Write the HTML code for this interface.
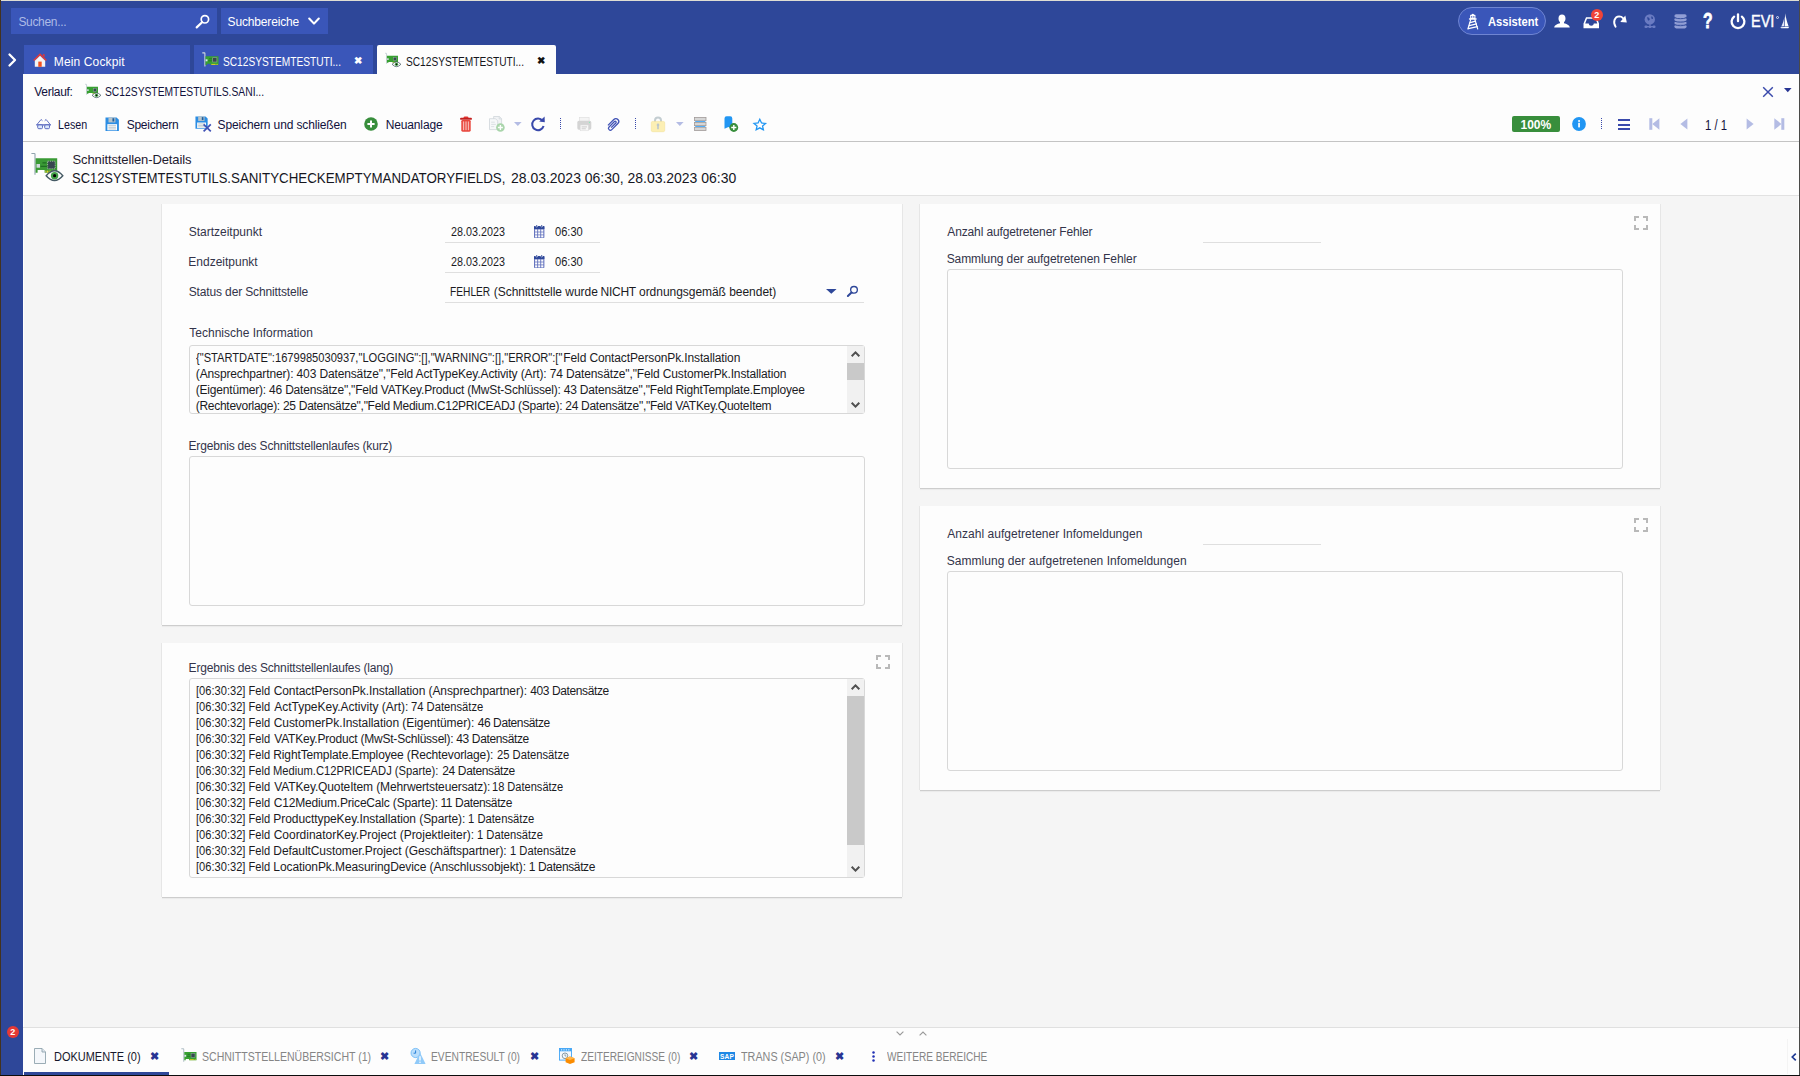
<!DOCTYPE html>
<html lang="de"><head><meta charset="utf-8"><title>Schnittstellen-Details</title>
<style>
*{box-sizing:border-box;margin:0;padding:0}
html,body{width:1800px;height:1076px;overflow:hidden;background:#f5f5f5}
body{font-family:"Liberation Sans",sans-serif;position:relative}
.t{position:absolute;white-space:pre;}
.a{position:absolute}
.panel{position:absolute;background:#fdfdfd;box-shadow:0 1px 0 #cdcdcd,0 2px 1px rgba(0,0,0,.04),1px 0 0 #e7e7e7,-1px 0 0 #e7e7e7}
.box{position:absolute;background:#fdfdfd;border:1px solid #d8d8d8;border-radius:3px}
.ul{position:absolute;height:1px;background:#dfdfdf}
svg{position:absolute;overflow:visible}
</style></head><body>
<div class="a" style="left:0px;top:0px;width:1800px;height:74px;background:#2e4799;"></div>
<div class="a" style="left:0px;top:74px;width:23px;height:1002px;background:#2e4799;"></div>
<div class="a" style="left:23px;top:74px;width:1777px;height:122px;background:#fdfdfd;"></div>
<div class="a" style="left:23px;top:141px;width:1777px;height:1px;background:#c4c4c4;"></div>
<div class="a" style="left:23px;top:195px;width:1777px;height:1px;background:#e2e2e2;"></div>
<div class="a" style="left:23px;top:1027px;width:1777px;height:49px;background:#fdfdfd;"></div>
<div class="a" style="left:23px;top:1027px;width:1777px;height:1px;background:#e0e0e0;"></div>
<div class="a" style="left:11px;top:8px;width:206px;height:26px;background:#3a56b9;"></div>
<span class="t" style="left:18.4px;top:13.84px;font-size:12px;line-height:16px;color:#aebbe6;letter-spacing:-0.325px;">Suchen...</span>
<svg style="left:195px;top:14px" width="16" height="15" viewBox="0 0 16 15"><circle cx="9.900" cy="5.300" r="3.700" fill="none" stroke="#fff" stroke-width="1.700"/><path d="M7.100 8.200 L1.700 13.400" stroke="#fff" stroke-width="2.200" stroke-linecap="round"/></svg>
<div class="a" style="left:221px;top:8px;width:107px;height:26px;background:#3a56b9;"></div>
<span class="t" style="left:227.6px;top:13.84px;font-size:12px;line-height:16px;color:#fff;letter-spacing:-0.163px;">Suchbereiche</span>
<svg style="left:308px;top:17px" width="12" height="9" viewBox="0 0 12 9"><path d="M1.2 1.5 L6 6.6 L10.8 1.5" fill="none" stroke="#fff" stroke-width="2.1" stroke-linecap="round" stroke-linejoin="round"/></svg>
<div class="a" style="left:1458px;top:7px;width:88px;height:28px;border-radius:14px;background:#3a56b9;border:1px solid #6f85d2"></div>
<svg style="left:1467px;top:12.600px" width="12" height="16.500" viewBox="0 0 12 16" preserveAspectRatio="none"><path d="M4.300 2.100 Q5.800 -0.600 7.300 2.100 Z" fill="#fff"/><g fill="none" stroke="#fff" stroke-width="1.150" stroke-linecap="round" stroke-linejoin="round"><path d="M3.700 2.300 H7.900 V5.200 H3.700 Z M5.800 2.300 V5.200"/><path d="M2.500 5.800 H9.100" stroke-width="1.300"/><path d="M3.700 6.400 L0.900 15.500"/><path d="M7.900 6.400 L10.700 15.500"/><path d="M3.100 9.300 L8.600 7.900"/><path d="M2.300 12.300 L9.500 10.500"/><path d="M1.400 15.200 L10.300 13.200"/></g></svg>
<span class="t" style="left:1488.3px;top:13.84px;font-size:12px;line-height:16px;color:#fff;font-weight:700;transform:scaleX(0.9291);transform-origin:0 0;">Assistent</span>
<svg style="left:1553px;top:14px" width="18" height="14" viewBox="0 0 18 14"><path d="M9 0.6c2.2 0 3.5 1.6 3.5 3.8 0 1.6-.7 3-1.5 3.8v1c2.6.7 5.4 1.6 5.8 4.2H1.200c.4-2.600 3.200-3.500 5.800-4.200v-1c-.8-.8-1.500-2.200-1.500-3.800C5.500 2.200 6.800.6 9 .6z" fill="#fff"/></svg>
<svg style="left:1583px;top:16px" width="17" height="13" viewBox="0 0 17 13"><path d="M3 1.200H13.600L16 7.600V12.300H0.500V7.600Z M4 2.700L2.200 7.600H5.700C5.900 9.100 6.900 9.800 8.250 9.800C9.600 9.800 10.600 9.100 10.800 7.600H14.300L12.600 2.700Z" fill="#fff" fill-rule="evenodd"/></svg>
<div class="a" style="left:1591.300px;top:9.300px;width:11.600px;height:11.600px;border-radius:6px;background:#f04438"></div>
<span class="t" style="left:1594.33px;top:7.18px;font-size:9px;line-height:16px;color:#fff;font-weight:700;">2</span>
<svg style="left:1612px;top:14px" width="16" height="14" viewBox="0 0 16 14"><path d="M3.600 12.800 C0.600 8 2.600 2.600 7.200 2.400 C8.800 2.400 10 3 11 4.200" fill="none" stroke="#fff" stroke-width="1.900" stroke-linecap="round"/><path d="M8.300 8 L13.300 1.500 L14.800 8.600 Z" fill="#fff"/></svg>
<svg style="left:1644px;top:14px" width="12" height="15" viewBox="0 0 12 15"><circle cx="5.800" cy="5.400" r="5.200" fill="#6a7bc2"/><path d="M3 3.500c1-.5 2 .3 2.600 1.200s-.6 2-1.600 1.800zM7.500 2.200c1 .3 1.800 1.300 1.500 2.300s-1.600.6-1.800-.4z" fill="#2e4799"/><path d="M6 10v2.500M2 12.700h8" stroke="#6a7bc2" stroke-width="1.200" fill="none"/><rect x="0.500" y="11.500" width="3" height="2.600" rx="1" fill="#6a7bc2"/><rect x="8.500" y="11.500" width="3" height="2.600" rx="1" fill="#6a7bc2"/><rect x="4.600" y="11.700" width="2.800" height="2.300" rx=".8" fill="#6a7bc2"/></svg>
<svg style="left:1674px;top:14px" width="13" height="15" viewBox="0 0 13 15"><g fill="#919ed5"><rect x="0.400" y="0.300" width="12.200" height="3.600" rx="1.800"/><rect x="0.400" y="3.800" width="12.200" height="3.500" rx="1.700"/><rect x="0.400" y="7.300" width="12.200" height="3.500" rx="1.700"/><rect x="0.400" y="10.800" width="12.200" height="3.600" rx="1.800"/></g><g stroke="#2e4799" stroke-width="0.900" fill="none"><path d="M1 3.800c2 1.200 9 1.200 11 0M1 7.300c2 1.200 9 1.200 11 0M1 10.800c2 1.200 9 1.200 11 0"/></g></svg>
<span class="t" style="left:1703.24px;top:6.45px;font-size:21.5px;line-height:30px;color:#fff;font-weight:700;transform:scaleX(0.7306);transform-origin:0 0;-webkit-text-stroke:0.8px #fff;">?</span>
<svg style="left:1730px;top:13px" width="16" height="16" viewBox="0 0 16 16"><path d="M4.100 3.600A6.400 6.400 0 1 0 11.900 3.600" fill="none" stroke="#fff" stroke-width="2.300" stroke-linecap="round"/><path d="M8 1.400V8.200" stroke="#fff" stroke-width="2.300" stroke-linecap="round"/></svg>
<span class="t" style="left:1751.14px;top:10.66px;font-size:16px;line-height:22px;color:#fff;transform:scaleX(0.9071);transform-origin:0 0;-webkit-text-stroke:0.4px #fff;">EVI</span>
<div class="a" style="left:1776px;top:16px;width:3px;height:3px;border-radius:2px;border:0.8px solid #dfe4f6"></div>
<svg style="left:1779.500px;top:13px" width="10" height="16" viewBox="0 0 10 16"><path d="M5.300 0.300 C5.900 4.500 6.900 9 8.600 13.200 L4.600 13.400 Z" fill="#fff"/><path d="M4.500 3.500 C3.900 7 2.900 10.400 1.300 13.500 L4 13.300 Z" fill="#e4e8f7"/><path d="M0.200 14.300 L9.300 13.700 L8.300 15.200 H1.400 Z" fill="#fff"/></svg>
<svg style="left:8px;top:53px" width="9" height="14" viewBox="0 0 9 14"><path d="M1.500 1.500 L7 7 L1.500 12.500" fill="none" stroke="#fff" stroke-width="2.300" stroke-linecap="round" stroke-linejoin="round"/></svg>
<div class="a" style="left:24px;top:45px;width:166px;height:29px;background:#3a56b9;"></div>
<div class="a" style="left:194px;top:45px;width:179px;height:29px;background:#3a56b9;"></div>
<div class="a" style="left:377px;top:45px;width:179px;height:29px;background:#fdfdfd;border-radius:2px 2px 0 0"></div>
<svg style="left:33px;top:53px" width="14" height="14" viewBox="0 0 14 14"><path d="M7 0.300 L0.200 7 L1.200 8 L7 2.400 L12.800 8 L13.800 7 Z" fill="#e53935"/><path d="M9.800 1.200h1.800v3l-1.800-1.700z" fill="#e53935"/><path d="M7 2.800 L1.800 7.800 V13.800 H12.200 V7.800 Z" fill="#f4f4f4"/><rect x="5.300" y="8.600" width="3.400" height="5.200" fill="#f4511e"/></svg>
<span class="t" style="left:53.84px;top:53.84px;font-size:12px;line-height:16px;color:#fff;letter-spacing:0.131px;">Mein Cockpit</span>
<svg style="left:201.6px;top:52.3px" width="17" height="15" viewBox="0 0 17 15"><path d="M0.300 0.900 H2.400 Q2.900 0.900 2.900 1.500 V14.600" fill="none" stroke="#cfd8dc" stroke-width="1.100"/><path d="M3.500 4.200 H16.500 V13 H8.600 V11.700 H5 V13 H3.500 Z" fill="#37a031"/><rect x="9.300" y="11.900" width="4.300" height="1" fill="#e0cc28"/><rect x="14.400" y="11.900" width="1.300" height="1" fill="#e0cc28"/><rect x="10.700" y="5.700" width="4.200" height="4.300" fill="#37474f" stroke="#8fa89a" stroke-width="0.600"/><rect x="3.600" y="7.300" width="1.900" height="2" fill="#dfe3f0"/><path d="M7 6.800h3M6.200 8.800h3.800" stroke="#1f6e24" stroke-width="0.800"/></svg>
<span class="t" style="left:222.89px;top:53.84px;font-size:12px;line-height:16px;color:#fff;transform:scaleX(0.8467);transform-origin:0 0;">SC12SYSTEMTESTUTI...</span>
<span class="t" style="left:353.6px;top:52.73px;font-size:10px;line-height:16px;color:#fff;font-weight:700;">✖</span>
<svg style="left:385px;top:53px" width="16" height="14" viewBox="0 0 16 14"><path d="M0.200 0.300 H1.200 Q1.600 0.300 1.600 0.800 V10.800" fill="none" stroke="#b8c4cc" stroke-width="0.800"/><path d="M1.900 2.800 H13 V9.700 H7.600 V8.900 H3.400 V9.700 H1.900 Z" fill="#37a031"/><rect x="7.800" y="8.900" width="2.400" height="0.800" fill="#e0cc28"/><rect x="8.300" y="4.300" width="3.200" height="3.200" fill="#37474f" stroke="#8fa89a" stroke-width="0.500"/><rect x="2.100" y="5.300" width="1.600" height="1.600" fill="#dfe3f0"/><path d="M7.100 11.300 Q11.500 6.600 15.900 11.300 Q11.500 16 7.100 11.300 Z" fill="#fdfdfd" stroke="#455a64" stroke-width="0.800"/><circle cx="11.500" cy="11.300" r="1.650" fill="#43a047"/><circle cx="11.500" cy="11.300" r="0.800" fill="#050505"/></svg>
<span class="t" style="left:406.49px;top:53.84px;font-size:12px;line-height:16px;color:#16161c;transform:scaleX(0.8467);transform-origin:0 0;">SC12SYSTEMTESTUTI...</span>
<span class="t" style="left:536.6px;top:52.73px;font-size:10px;line-height:16px;color:#111;font-weight:700;">✖</span>
<span class="t" style="left:34.3px;top:83.84px;font-size:12px;line-height:16px;color:#11113c;letter-spacing:-0.300px;">Verlauf:</span>
<svg style="left:85.3px;top:84px" width="16" height="14" viewBox="0 0 16 14"><path d="M0.200 0.300 H1.200 Q1.600 0.300 1.600 0.800 V10.800" fill="none" stroke="#b8c4cc" stroke-width="0.800"/><path d="M1.900 2.800 H13 V9.700 H7.600 V8.900 H3.400 V9.700 H1.900 Z" fill="#37a031"/><rect x="7.800" y="8.900" width="2.400" height="0.800" fill="#e0cc28"/><rect x="8.300" y="4.300" width="3.200" height="3.200" fill="#37474f" stroke="#8fa89a" stroke-width="0.500"/><rect x="2.100" y="5.300" width="1.600" height="1.600" fill="#dfe3f0"/><path d="M7.100 11.300 Q11.500 6.600 15.900 11.300 Q11.500 16 7.100 11.300 Z" fill="#fdfdfd" stroke="#455a64" stroke-width="0.800"/><circle cx="11.500" cy="11.300" r="1.650" fill="#43a047"/><circle cx="11.500" cy="11.300" r="0.800" fill="#050505"/></svg>
<span class="t" style="left:105.49px;top:83.84px;font-size:12px;line-height:16px;color:#11113c;transform:scaleX(0.8582);transform-origin:0 0;">SC12SYSTEMTESTUTILS.SANI...</span>
<svg style="left:1762px;top:86px" width="12" height="12" viewBox="0 0 12 12"><path d="M1.200 1.200 L10.800 10.800 M10.800 1.200 L1.200 10.800" stroke="#3949ab" stroke-width="1.450" fill="none"/></svg>
<svg style="left:1783.600px;top:88px" width="7.600" height="4.200" viewBox="0 0 7.600 4.200"><path d="M0 0 H7.600 L3.800 4.200 Z" fill="#283593"/></svg>
<svg style="left:35.500px;top:119px" width="15.200" height="10.400" viewBox="0 0 15.200 10.400"><g fill="none" stroke="#5c6bc0" stroke-width="0.950" stroke-linejoin="round" stroke-linecap="round"><path d="M0.900 5.600 L5.100 0.500 L6.200 1.500"/><path d="M14.300 5.600 L10.100 0.500 L9 1.500"/></g><path d="M0.400 5.200 H14.800 V6.600 H0.400z" fill="#5c6bc0"/><rect x="1.700" y="5.900" width="4.800" height="3.800" rx="1.100" fill="#dbe8fc" stroke="#5c6bc0" stroke-width="1"/><rect x="8.700" y="5.900" width="4.800" height="3.800" rx="1.100" fill="#dbe8fc" stroke="#5c6bc0" stroke-width="1"/></svg>
<span class="t" style="left:57.84px;top:116.84px;font-size:12px;line-height:16px;color:#11113c;transform:scaleX(0.8929);transform-origin:0 0;">Lesen</span>
<svg style="left:105px;top:116.800px" width="14.300" height="14.300" viewBox="0 0 14 14"><path d="M0.500 0.500 H11.300 L13.600 2.800 V13.600 H0.500 Z" fill="#2b8de3"/><rect x="3.400" y="0.500" width="6.800" height="4.800" fill="#b7c4cb"/><rect x="7.300" y="1.200" width="1.800" height="3.200" fill="#1e5f9e"/><rect x="2.300" y="7" width="9.500" height="6" fill="#fbfcfd"/><path d="M3.400 8.500h7.300M3.400 10.100h7.300M3.400 11.700h7.300" stroke="#b0bec5" stroke-width="0.800"/></svg>
<span class="t" style="left:126.7px;top:116.84px;font-size:12px;line-height:16px;color:#11113c;letter-spacing:-0.256px;">Speichern</span>
<svg style="left:194.500px;top:116px" width="17" height="16" viewBox="0 0 17 16"><g transform="scale(0.930)"><path d="M0.500 0.500 H11.300 L13.600 2.800 V13.600 H0.500 Z" fill="#2b8de3"/><rect x="3.400" y="0.500" width="6.800" height="4.800" fill="#b7c4cb"/><rect x="7.300" y="1.200" width="1.800" height="3.200" fill="#1e5f9e"/><rect x="2.300" y="7" width="9.500" height="6" fill="#fbfcfd"/><path d="M3.400 8.500h7.300M3.400 10.100h7.300M3.400 11.700h7.300" stroke="#b0bec5" stroke-width="0.800"/></g><path d="M8.600 8.400 L15.800 15.400 M15.800 8.400 L8.600 15.400" stroke="#3f51b5" stroke-width="1.700"/></svg>
<span class="t" style="left:217.6px;top:116.84px;font-size:12px;line-height:16px;color:#11113c;letter-spacing:-0.136px;">Speichern und schließen</span>
<svg style="left:364px;top:117px" width="14" height="14" viewBox="0 0 14 14"><circle cx="7" cy="7" r="6.800" fill="#388e3c"/><path d="M7 3.400V10.600M3.400 7H10.600" stroke="#fff" stroke-width="2"/></svg>
<span class="t" style="left:385.74px;top:116.84px;font-size:12px;line-height:16px;color:#11113c;letter-spacing:-0.145px;">Neuanlage</span>
<svg style="left:460px;top:116px" width="12" height="16" viewBox="0 0 12 16"><rect x="3.600" y="0.400" width="4.800" height="2.400" rx="1.200" fill="#e53935"/><rect x="0.100" y="1.700" width="11.800" height="2.100" rx="0.900" fill="#c4201f"/><rect x="1.300" y="3.900" width="9.400" height="11.800" rx="1.400" fill="#e8463c"/><g fill="#f7b5b0"><rect x="2.900" y="5.400" width="1.300" height="8.800"/><rect x="5.350" y="5.400" width="1.300" height="8.800"/><rect x="7.800" y="5.400" width="1.300" height="8.800"/></g></svg>
<svg style="left:488.500px;top:116px" width="16" height="16" viewBox="0 0 16 16"><path d="M4.600 0.500h5.800l2.200 2.200v7.500h-8z" fill="#f1f3f5" stroke="#cfd6da" stroke-width="0.800"/><path d="M10.200 0.600v2.300h2.300" fill="none" stroke="#cfd6da" stroke-width="0.700"/><path d="M0.500 2.700h6l2.200 2.200v8.700h-8.200z" fill="#f6f8f9" stroke="#cfd6da" stroke-width="0.800"/><path d="M2.200 6.200h3.600M2.200 8.400h4.600M2.200 10.600h3" stroke="#d3dade" stroke-width="0.800"/><circle cx="11.400" cy="11.500" r="4.300" fill="#a9d5ab"/><path d="M11.400 9v5M8.900 11.500h5" stroke="#fdfdfd" stroke-width="1.400"/></svg>
<svg style="left:513.800px;top:122.200px" width="7.600" height="4" viewBox="0 0 8 4"><path d="M0 0H8L4 4z" fill="#b4bce4"/></svg>
<svg style="left:530px;top:115.500px" width="16" height="16" viewBox="0 0 16 16"><path d="M12.600 4.800 A5.800 5.800 0 1 0 13.600 10" fill="none" stroke="#3949ab" stroke-width="2"/><path d="M9.200 5.600 L14.600 0.600 L14.800 6.200 Z" fill="#3949ab"/></svg>
<div class="a" style="left:560px;top:118px;width:1px;height:12px;background:repeating-linear-gradient(to bottom,#3949ab 0,#3949ab 1px,transparent 1px,transparent 2px)"></div>
<svg style="left:576.700px;top:117px" width="14.600" height="14.200" viewBox="0 0 14.600 14.200"><rect x="2.500" y="0.300" width="9.600" height="4" fill="#f4f4f4" stroke="#dcdcdc" stroke-width="0.600"/><rect x="0.300" y="3.800" width="14" height="8.900" rx="1.600" fill="#d4d4d4"/><rect x="3.200" y="8" width="8.200" height="5.800" fill="#f7f7f7" stroke="#dadada" stroke-width="0.500"/><path d="M4.600 9.900h5.400M4.600 11.800h4.200" stroke="#c2c2c2" stroke-width="0.800"/><circle cx="12.500" cy="5.400" r="0.600" fill="#8ee8b8"/></svg>
<svg style="left:605.900px;top:116.600px" width="14.400" height="14.400" viewBox="0 0 13 13"><g transform="rotate(45 6.500 6.500)" fill="none" stroke="#3f51b5" stroke-width="1.150"><path d="M3.900 10.600 V3.100 a2.600 2.600 0 0 1 5.200 0 V10.900 a1.750 1.750 0 0 1 -3.500 0 V4 a0.900 0.900 0 0 1 1.800 0 V10"/></g></svg>
<div class="a" style="left:635px;top:118px;width:1px;height:12px;background:repeating-linear-gradient(to bottom,#3949ab 0,#3949ab 1px,transparent 1px,transparent 2px)"></div>
<svg style="left:650.800px;top:116px" width="14" height="16" viewBox="0 0 14 16"><path d="M4 6.500V4.600a3 3 0 0 1 6 0V6.500" fill="none" stroke="#c3cdd1" stroke-width="2"/><rect x="0.300" y="5.400" width="13.400" height="10.300" rx="1.400" fill="#fcefb4" stroke="#f3e29a" stroke-width="0.600"/><circle cx="7" cy="8.900" r="1.300" fill="#bcc7cc"/><rect x="6.200" y="9" width="1.600" height="4.200" rx="0.500" fill="#bcc7cc"/></svg>
<svg style="left:675.800px;top:122.200px" width="7.600" height="4" viewBox="0 0 8 4"><path d="M0 0H8L4 4z" fill="#b4bce4"/></svg>
<svg style="left:694px;top:117px" width="12.500" height="14" viewBox="0 0 12.500 14"><g fill="#d6d6d6" stroke="#a19b99" stroke-width="0.800"><rect x="0.500" y="0.500" width="11.500" height="3.200"/><rect x="0.500" y="5.400" width="11.500" height="3.200"/><rect x="0.500" y="10.300" width="11.500" height="3.200"/></g><rect x="1.200" y="4.100" width="10.100" height="0.900" fill="#42a5f5"/><rect x="1.200" y="9" width="10.100" height="0.900" fill="#42a5f5"/></svg>
<svg style="left:723.500px;top:116px" width="15" height="16" viewBox="0 0 15 16"><path d="M0.500 2.400 Q0.500 0.300 2.600 0.300 H6.200 Q8.300 0.300 8.300 2.400 V12.800 L4.400 11 L0.500 12.800 Z" fill="#2196f3"/><circle cx="9.800" cy="11.500" r="4.400" fill="#388e3c"/><path d="M9.800 8.900v5.200M7.200 11.500h5.200" stroke="#fff" stroke-width="1.400"/></svg>
<svg style="left:753.200px;top:117.700px" width="13.600" height="12.800" viewBox="0 0 14.500 13"><path d="M7.250 1.100 L9.100 5 L13.400 5.500 L10.200 8.300 L11.100 12.300 L7.250 10.200 L3.400 12.300 L4.300 8.300 L1.100 5.500 L5.400 5 Z" fill="none" stroke="#2196f3" stroke-width="1.400" stroke-linejoin="miter"/></svg>
<div class="a" style="left:1512px;top:116px;width:48px;height:16px;background:#388e3c;border-radius:2px"></div>
<span class="t" style="left:1520.5px;top:116.84px;font-size:12px;line-height:16px;color:#fff;font-weight:700;letter-spacing:-0.034px;">100%</span>
<svg style="left:1572px;top:117px" width="14" height="14" viewBox="0 0 14 14"><circle cx="7" cy="7" r="6.900" fill="#2196f3"/><rect x="6.200" y="5.800" width="1.700" height="4.600" fill="#fff"/><circle cx="7.050" cy="3.900" r="1" fill="#fff"/></svg>
<div class="a" style="left:1601px;top:118px;width:1px;height:12px;background:repeating-linear-gradient(to bottom,#3949ab 0,#3949ab 1px,transparent 1px,transparent 2px)"></div>
<div class="a" style="left:1618px;top:119px;width:12px;height:2px;background:#3949ab;"></div>
<div class="a" style="left:1618px;top:123.5px;width:12px;height:2px;background:#3949ab;"></div>
<div class="a" style="left:1618px;top:128px;width:12px;height:2px;background:#3949ab;"></div>
<svg style="left:1648.600px;top:118px" width="11" height="12" viewBox="0 0 11 12"><rect x="0.300" y="0.200" width="3" height="11.600" fill="#b4bce4"/><path d="M10.400 0.200 V11.800 L3.300 6 Z" fill="#b4bce4"/></svg>
<svg style="left:1680px;top:118px" width="8" height="12" viewBox="0 0 8 12"><path d="M7.400 0.400 V11.600 L0.400 6 Z" fill="#b4bce4"/></svg>
<span class="t" style="left:1704.87px;top:115.65px;font-size:14px;line-height:19px;color:#11113c;transform:scaleX(0.8073);transform-origin:0 0;">1 / 1</span>
<svg style="left:1746px;top:118px" width="8" height="12" viewBox="0 0 8 12"><path d="M0.600 0.400 V11.600 L7.600 6 Z" fill="#b4bce4"/></svg>
<svg style="left:1773.800px;top:118px" width="11" height="12" viewBox="0 0 11 12"><rect x="7.300" y="0.200" width="3" height="11.600" fill="#b4bce4"/><path d="M0.300 0.200 V11.800 L7.400 6 Z" fill="#b4bce4"/></svg>
<svg style="left:30.500px;top:153px" width="33" height="29" viewBox="0 0 33 29"><path d="M0.400 0.500 H3.300 Q4 0.500 4 1.300 V21.800" fill="none" stroke="#90a4ae" stroke-width="1.100"/><path d="M4.600 5.300 H26.200 V19.800 H13.600 V17.100 H6.600 V19.800 H4.600 Z" fill="#3a9a35"/><g fill="#e8cc2a"><rect x="14.400" y="17.600" width="1" height="2"/><rect x="16" y="17.600" width="1" height="2"/><rect x="17.600" y="17.600" width="1" height="2"/><rect x="19.200" y="17.600" width="1" height="2"/><rect x="20.800" y="17.600" width="1" height="2"/></g><rect x="16.600" y="8.200" width="7.600" height="7.600" fill="#37474f" stroke="#a5c0a8" stroke-width="0.900" stroke-dasharray="1.300 0.900"/><rect x="5.500" y="11" width="3.500" height="3.700" fill="#cfd8dc"/><path d="M11.400 9.800h4M9.600 13.400h6.800" stroke="#1f6e24" stroke-width="1.200"/><path d="M15.200 22.700 Q23.500 12.900 31.800 22.700 Q23.500 32.400 15.200 22.700 Z" fill="#fdfdfd" stroke="#455a64" stroke-width="1.400" stroke-linejoin="miter"/><circle cx="23.600" cy="22.700" r="3.700" fill="#43a047"/><circle cx="23.600" cy="22.700" r="1.600" fill="#050505"/></svg>
<span class="t" style="left:72.55px;top:151.50px;font-size:13px;line-height:16px;color:#1f2030;letter-spacing:-0.119px;">Schnittstellen-Details</span>
<span class="t" style="left:71.95px;top:167.30px;font-size:15px;line-height:21px;color:#15161f;transform:scaleX(0.8626);transform-origin:0 0;">SC12SYSTEMTESTUTILS.</span><span class="t" style="left:231.23px;top:167.30px;font-size:15px;line-height:21px;color:#15161f;transform:scaleX(0.8874);transform-origin:0 0;">SANITYCHECKEMPTYMANDATORYFIELDS,</span>
<span class="t" style="left:510.78px;top:167.30px;font-size:15px;line-height:21px;color:#15161f;transform:scaleX(0.9310);transform-origin:0 0;">28.03.2023 06:30, 28.03.2023 06:30</span>
<div class="panel" style="left:162px;top:204px;width:740px;height:421px"></div>
<div class="panel" style="left:162px;top:643px;width:740px;height:254px"></div>
<div class="panel" style="left:920px;top:204px;width:740px;height:284px"></div>
<div class="panel" style="left:920px;top:506px;width:740px;height:284px"></div>
<span class="t" style="left:188.7px;top:223.84px;font-size:12px;line-height:16px;color:#33344a;letter-spacing:-0.006px;">Startzeitpunkt</span>
<span class="t" style="left:450.88px;top:223.84px;font-size:12px;line-height:16px;color:#1b1b1f;transform:scaleX(0.8974);transform-origin:0 0;">28.03.2023</span>
<svg style="left:533.8px;top:224.6px" width="10.400" height="13" viewBox="0 0 10.400 13"><rect x="0" y="0.900" width="10.400" height="12.100" rx="0.800" fill="#6675bf"/><path d="M0 1.700 Q0 0.900 0.800 0.900 H9.600 Q10.400 0.900 10.400 1.700 V3.900 H0 Z" fill="#2e4799"/><g fill="#fdfdfd"><rect x="1.1" y="4.5" width="2.100" height="2.100"/><rect x="4.15" y="4.5" width="2.100" height="2.100"/><rect x="7.2" y="4.5" width="2.100" height="2.100"/><rect x="1.1" y="7.4" width="2.100" height="2.100"/><rect x="4.15" y="7.4" width="2.100" height="2.100"/><rect x="7.2" y="7.4" width="2.100" height="2.100"/><rect x="1.1" y="10.3" width="2.100" height="2.100"/><rect x="4.15" y="10.3" width="2.100" height="2.100"/><rect x="7.2" y="10.3" width="2.100" height="2.100"/></g><g fill="none" stroke="#fdfdfd" stroke-width="0.700"><path d="M1.700 0.900 a1 1 0 0 0 2 0"/><path d="M6.700 0.900 a1 1 0 0 0 2 0"/></g><g fill="#2e4799"><rect x="2.300" y="0" width="0.900" height="1.600"/><rect x="7.300" y="0" width="0.900" height="1.600"/></g></svg>
<span class="t" style="left:555.36px;top:223.84px;font-size:12px;line-height:16px;color:#1b1b1f;transform:scaleX(0.9257);transform-origin:0 0;">06:30</span>
<div class="ul" style="left:445px;top:242px;width:155px"></div>
<span class="t" style="left:188.34px;top:253.84px;font-size:12px;line-height:16px;color:#33344a;letter-spacing:-0.008px;">Endzeitpunkt</span>
<span class="t" style="left:450.88px;top:253.84px;font-size:12px;line-height:16px;color:#1b1b1f;transform:scaleX(0.8974);transform-origin:0 0;">28.03.2023</span>
<svg style="left:533.8px;top:254.6px" width="10.400" height="13" viewBox="0 0 10.400 13"><rect x="0" y="0.900" width="10.400" height="12.100" rx="0.800" fill="#6675bf"/><path d="M0 1.700 Q0 0.900 0.800 0.900 H9.600 Q10.400 0.900 10.400 1.700 V3.900 H0 Z" fill="#2e4799"/><g fill="#fdfdfd"><rect x="1.1" y="4.5" width="2.100" height="2.100"/><rect x="4.15" y="4.5" width="2.100" height="2.100"/><rect x="7.2" y="4.5" width="2.100" height="2.100"/><rect x="1.1" y="7.4" width="2.100" height="2.100"/><rect x="4.15" y="7.4" width="2.100" height="2.100"/><rect x="7.2" y="7.4" width="2.100" height="2.100"/><rect x="1.1" y="10.3" width="2.100" height="2.100"/><rect x="4.15" y="10.3" width="2.100" height="2.100"/><rect x="7.2" y="10.3" width="2.100" height="2.100"/></g><g fill="none" stroke="#fdfdfd" stroke-width="0.700"><path d="M1.700 0.900 a1 1 0 0 0 2 0"/><path d="M6.700 0.900 a1 1 0 0 0 2 0"/></g><g fill="#2e4799"><rect x="2.300" y="0" width="0.900" height="1.600"/><rect x="7.300" y="0" width="0.900" height="1.600"/></g></svg>
<span class="t" style="left:555.36px;top:253.84px;font-size:12px;line-height:16px;color:#1b1b1f;transform:scaleX(0.9257);transform-origin:0 0;">06:30</span>
<div class="ul" style="left:445px;top:272px;width:155px"></div>
<span class="t" style="left:188.7px;top:283.84px;font-size:12px;line-height:16px;color:#33344a;letter-spacing:-0.136px;">Status der Schnittstelle</span>
<span class="t" style="left:450.38px;top:283.84px;font-size:12px;line-height:16px;color:#1b1b1f;transform:scaleX(0.8491);transform-origin:0 0;">FEHLER</span>
<span class="t" style="left:493.78px;top:283.84px;font-size:12px;line-height:16px;color:#1b1b1f;letter-spacing:-0.033px;">(Schnittstelle wurde</span>
<span class="t" style="left:600.54px;top:283.84px;font-size:12px;line-height:16px;color:#1b1b1f;letter-spacing:-0.268px;">NICHT</span>
<span class="t" style="left:639.02px;top:283.84px;font-size:12px;line-height:16px;color:#1b1b1f;letter-spacing:-0.038px;">ordnungsgemäß beendet)</span>
<div class="ul" style="left:445px;top:302px;width:419px"></div>
<svg style="left:825.700px;top:288.800px" width="10.600" height="4.800" viewBox="0 0 10.600 4.800"><path d="M0 0H10.600L5.300 4.800z" fill="#2e4799"/></svg>
<svg style="left:846px;top:285px" width="13" height="13" viewBox="0 0 13 13"><circle cx="8" cy="4.800" r="3.350" fill="none" stroke="#2e4799" stroke-width="1.350"/><path d="M5.500 7.500 L1.900 11" stroke="#2e4799" stroke-width="2" stroke-linecap="round"/></svg>
<span class="t" style="left:189.26px;top:324.84px;font-size:12px;line-height:16px;color:#33344a;letter-spacing:0.009px;">Technische Information</span>
<div class="box" style="left:189px;top:345px;width:676px;height:69px"></div>
<span class="t" style="left:196.17px;top:349.84px;font-size:12px;line-height:16px;color:#1b1b1f;transform:scaleX(0.9268);transform-origin:0 0;">{"STARTDATE":1679985030937,"LOGGING":[],"WARNING":[],"ERROR":["</span><span class="t" style="left:563.34px;top:349.84px;font-size:12px;line-height:16px;color:#1b1b1f;letter-spacing:-0.118px;">Feld ContactPersonPk.Installation</span>
<span class="t" style="left:195.78px;top:365.84px;font-size:12px;line-height:16px;color:#1b1b1f;letter-spacing:-0.135px;">(Ansprechpartner): 403 Datensätze","Feld ActTypeKey.Activity (Art): 74 Datensätze","Feld CustomerPk.Installation</span>
<span class="t" style="left:195.78px;top:381.84px;font-size:12px;line-height:16px;color:#1b1b1f;letter-spacing:-0.196px;">(Eigentümer): 46 Datensätze","Feld VATKey.Product (MwSt-Schlüssel): 43 Datensätze","Feld RightTemplate.Employee</span>
<span class="t" style="left:195.78px;top:397.84px;font-size:12px;line-height:16px;color:#1b1b1f;letter-spacing:-0.286px;">(Rechtevorlage): 25 Datensätze","Feld Medium.C12PRICEADJ (Sparte): 24 Datensätze","Feld VATKey.QuoteItem</span>
<div class="a" style="left:847px;top:346px;width:17px;height:67px;background:#f1f1f1;"></div>
<svg style="left:851px;top:351px" width="9" height="6" viewBox="0 0 9 6"><path d="M0.700 5.300 L4.500 1.400 L8.300 5.300" fill="none" stroke="#505050" stroke-width="2"/></svg>
<svg style="left:851px;top:401.5px" width="9" height="6" viewBox="0 0 9 6"><path d="M0.700 0.700 L4.500 4.600 L8.300 0.700" fill="none" stroke="#505050" stroke-width="2"/></svg>
<div class="a" style="left:847px;top:363.2px;width:17px;height:16.6px;background:#c9c9c9;"></div>
<span class="t" style="left:188.54px;top:437.84px;font-size:12px;line-height:16px;color:#33344a;letter-spacing:-0.179px;">Ergebnis des Schnittstellenlaufes (kurz)</span>
<div class="box" style="left:189px;top:456px;width:676px;height:150px"></div>
<span class="t" style="left:188.54px;top:659.84px;font-size:12px;line-height:16px;color:#33344a;letter-spacing:-0.154px;">Ergebnis des Schnittstellenlaufes (lang)</span>
<div class="box" style="left:189px;top:678px;width:676px;height:200px"></div>
<span class="t" style="left:195.72px;top:682.84px;font-size:12px;line-height:16px;color:#1b1b1f;transform:scaleX(0.9255);transform-origin:0 0;">[06:30:32] Feld</span>
<span class="t" style="left:273.7px;top:682.84px;font-size:12px;line-height:16px;color:#1b1b1f;letter-spacing:-0.089px;">ContactPersonPk.Installation (Ansprechpartner):</span>
<span class="t" style="left:530.31px;top:682.84px;font-size:12px;line-height:16px;color:#1b1b1f;letter-spacing:-0.395px;">403 Datensätze</span>
<span class="t" style="left:195.72px;top:698.84px;font-size:12px;line-height:16px;color:#1b1b1f;transform:scaleX(0.9255);transform-origin:0 0;">[06:30:32] Feld</span>
<span class="t" style="left:274.3px;top:698.84px;font-size:12px;line-height:16px;color:#1b1b1f;letter-spacing:-0.018px;">ActTypeKey.Activity (Art):</span>
<span class="t" style="left:410.77px;top:698.84px;font-size:12px;line-height:16px;color:#1b1b1f;transform:scaleX(0.9338);transform-origin:0 0;">74 Datensätze</span>
<span class="t" style="left:195.72px;top:714.84px;font-size:12px;line-height:16px;color:#1b1b1f;transform:scaleX(0.9255);transform-origin:0 0;">[06:30:32] Feld</span>
<span class="t" style="left:273.7px;top:714.84px;font-size:12px;line-height:16px;color:#1b1b1f;letter-spacing:-0.057px;">CustomerPk.Installation (Eigentümer):</span>
<span class="t" style="left:477.64px;top:714.84px;font-size:12px;line-height:16px;color:#1b1b1f;letter-spacing:-0.399px;">46 Datensätze</span>
<span class="t" style="left:195.72px;top:730.84px;font-size:12px;line-height:16px;color:#1b1b1f;transform:scaleX(0.9255);transform-origin:0 0;">[06:30:32] Feld</span>
<span class="t" style="left:274.3px;top:730.84px;font-size:12px;line-height:16px;color:#1b1b1f;letter-spacing:-0.215px;">VATKey.Product (MwSt-Schlüssel):</span>
<span class="t" style="left:456.31px;top:730.84px;font-size:12px;line-height:16px;color:#1b1b1f;letter-spacing:-0.371px;">43 Datensätze</span>
<span class="t" style="left:195.72px;top:746.84px;font-size:12px;line-height:16px;color:#1b1b1f;transform:scaleX(0.9255);transform-origin:0 0;">[06:30:32] Feld</span>
<span class="t" style="left:273.34px;top:746.84px;font-size:12px;line-height:16px;color:#1b1b1f;letter-spacing:-0.143px;">RightTemplate.Employee (Rechtevorlage):</span>
<span class="t" style="left:497.0px;top:746.84px;font-size:12px;line-height:16px;color:#1b1b1f;transform:scaleX(0.9338);transform-origin:0 0;">25 Datensätze</span>
<span class="t" style="left:195.72px;top:762.84px;font-size:12px;line-height:16px;color:#1b1b1f;transform:scaleX(0.9255);transform-origin:0 0;">[06:30:32] Feld</span>
<span class="t" style="left:273.41px;top:762.84px;font-size:12px;line-height:16px;color:#1b1b1f;transform:scaleX(0.9322);transform-origin:0 0;">Medium.C12PRICEADJ (Sparte):</span>
<span class="t" style="left:442.31px;top:762.84px;font-size:12px;line-height:16px;color:#1b1b1f;letter-spacing:-0.371px;">24 Datensätze</span>
<span class="t" style="left:195.72px;top:778.84px;font-size:12px;line-height:16px;color:#1b1b1f;transform:scaleX(0.9255);transform-origin:0 0;">[06:30:32] Feld</span>
<span class="t" style="left:274.3px;top:778.84px;font-size:12px;line-height:16px;color:#1b1b1f;letter-spacing:-0.127px;">VATKey.QuoteItem (Mehrwertsteuersatz):</span>
<span class="t" style="left:492.23px;top:778.84px;font-size:12px;line-height:16px;color:#1b1b1f;transform:scaleX(0.9209);transform-origin:0 0;">18 Datensätze</span>
<span class="t" style="left:195.72px;top:794.84px;font-size:12px;line-height:16px;color:#1b1b1f;transform:scaleX(0.9255);transform-origin:0 0;">[06:30:32] Feld</span>
<span class="t" style="left:273.7px;top:794.84px;font-size:12px;line-height:16px;color:#1b1b1f;letter-spacing:-0.179px;">C12Medium.PriceCalc (Sparte):</span>
<span class="t" style="left:440.47px;top:794.84px;font-size:12px;line-height:16px;color:#1b1b1f;letter-spacing:-0.381px;">11 Datensätze</span>
<span class="t" style="left:195.72px;top:810.84px;font-size:12px;line-height:16px;color:#1b1b1f;transform:scaleX(0.9255);transform-origin:0 0;">[06:30:32] Feld</span>
<span class="t" style="left:273.34px;top:810.84px;font-size:12px;line-height:16px;color:#1b1b1f;letter-spacing:-0.070px;">ProducttypeKey.Installation (Sparte):</span>
<span class="t" style="left:468.21px;top:810.84px;font-size:12px;line-height:16px;color:#1b1b1f;transform:scaleX(0.9370);transform-origin:0 0;">1 Datensätze</span>
<span class="t" style="left:195.72px;top:826.84px;font-size:12px;line-height:16px;color:#1b1b1f;transform:scaleX(0.9255);transform-origin:0 0;">[06:30:32] Feld</span>
<span class="t" style="left:273.7px;top:826.84px;font-size:12px;line-height:16px;color:#1b1b1f;letter-spacing:-0.022px;">CoordinatorKey.Project (Projektleiter):</span>
<span class="t" style="left:476.55px;top:826.84px;font-size:12px;line-height:16px;color:#1b1b1f;transform:scaleX(0.9323);transform-origin:0 0;">1 Datensätze</span>
<span class="t" style="left:195.72px;top:842.84px;font-size:12px;line-height:16px;color:#1b1b1f;transform:scaleX(0.9255);transform-origin:0 0;">[06:30:32] Feld</span>
<span class="t" style="left:273.34px;top:842.84px;font-size:12px;line-height:16px;color:#1b1b1f;letter-spacing:-0.081px;">DefaultCustomer.Project (Geschäftspartner):</span>
<span class="t" style="left:509.55px;top:842.84px;font-size:12px;line-height:16px;color:#1b1b1f;transform:scaleX(0.9323);transform-origin:0 0;">1 Datensätze</span>
<span class="t" style="left:195.72px;top:858.84px;font-size:12px;line-height:16px;color:#1b1b1f;transform:scaleX(0.9255);transform-origin:0 0;">[06:30:32] Feld</span>
<span class="t" style="left:273.34px;top:858.84px;font-size:12px;line-height:16px;color:#1b1b1f;letter-spacing:-0.093px;">LocationPk.MeasuringDevice (Anschlussobjekt):</span>
<span class="t" style="left:528.8px;top:858.84px;font-size:12px;line-height:16px;color:#1b1b1f;letter-spacing:-0.374px;">1 Datensätze</span>
<div class="a" style="left:847px;top:679px;width:17px;height:198px;background:#f1f1f1;"></div>
<svg style="left:851px;top:684px" width="9" height="6" viewBox="0 0 9 6"><path d="M0.700 5.300 L4.500 1.400 L8.300 5.300" fill="none" stroke="#505050" stroke-width="2"/></svg>
<svg style="left:851px;top:865.5px" width="9" height="6" viewBox="0 0 9 6"><path d="M0.700 0.700 L4.500 4.600 L8.300 0.700" fill="none" stroke="#505050" stroke-width="2"/></svg>
<div class="a" style="left:847px;top:696px;width:17px;height:149px;background:#c9c9c9;"></div>
<svg style="left:876px;top:655px" width="14" height="14" viewBox="0 0 14 14"><path d="M0 0h5v2h-3v3h-2zM9 0h5v5h-2v-3h-3zM0 9h2v3h3v2h-5zM12 9h2v5h-5v-2h3z" fill="#b9b9b9"/></svg>
<svg style="left:1634px;top:216px" width="14" height="14" viewBox="0 0 14 14"><path d="M0 0h5v2h-3v3h-2zM9 0h5v5h-2v-3h-3zM0 9h2v3h3v2h-5zM12 9h2v5h-5v-2h3z" fill="#b9b9b9"/></svg>
<svg style="left:1634px;top:518px" width="14" height="14" viewBox="0 0 14 14"><path d="M0 0h5v2h-3v3h-2zM9 0h5v5h-2v-3h-3zM0 9h2v3h3v2h-5zM12 9h2v5h-5v-2h3z" fill="#b9b9b9"/></svg>
<span class="t" style="left:947.3px;top:223.84px;font-size:12px;line-height:16px;color:#33344a;letter-spacing:-0.133px;">Anzahl aufgetretener Fehler</span>
<div class="ul" style="left:1203px;top:242px;width:118px"></div>
<span class="t" style="left:946.7px;top:250.84px;font-size:12px;line-height:16px;color:#33344a;letter-spacing:-0.087px;">Sammlung der aufgetretenen Fehler</span>
<div class="box" style="left:947px;top:269px;width:676px;height:200px"></div>
<span class="t" style="left:947.3px;top:525.84px;font-size:12px;line-height:16px;color:#33344a;letter-spacing:0.029px;">Anzahl aufgetretener Infomeldungen</span>
<div class="ul" style="left:1203px;top:544px;width:118px"></div>
<span class="t" style="left:946.7px;top:552.84px;font-size:12px;line-height:16px;color:#33344a;letter-spacing:0.047px;">Sammlung der aufgetretenen Infomeldungen</span>
<div class="box" style="left:947px;top:571px;width:676px;height:200px"></div>
<div class="a" style="left:7px;top:1026px;width:12px;height:12px;border-radius:6px;background:#e53935"></div>
<span class="t" style="left:10.23px;top:1024.18px;font-size:9px;line-height:16px;color:#fff;font-weight:700;">2</span>
<svg style="left:896px;top:1030.500px" width="8" height="5" viewBox="0 0 8 5"><path d="M0.600 0.600 L4 4 L7.400 0.600" fill="none" stroke="#9a9a9a" stroke-width="1.100"/></svg>
<svg style="left:919px;top:1030.500px" width="8" height="5" viewBox="0 0 8 5"><path d="M0.600 4.400 L4 1 L7.400 4.400" fill="none" stroke="#9a9a9a" stroke-width="1.100"/></svg>
<div class="a" style="left:24px;top:1072px;width:145px;height:3px;background:#2e4799;"></div>
<svg style="left:34px;top:1048px" width="12" height="16" viewBox="0 0 12 16"><path d="M0.500 0.500 H8 L11.500 4 V15.500 H0.500 Z" fill="#f4f7fb" stroke="#90a4ae" stroke-width="0.900"/><path d="M8 0.500 V4 H11.500" fill="#dfe6ee" stroke="#90a4ae" stroke-width="0.900"/></svg>
<span class="t" style="left:53.62px;top:1048.84px;font-size:12px;line-height:16px;color:#15162a;transform:scaleX(0.9147);transform-origin:0 0;">DOKUMENTE (0)</span>
<span class="t" style="left:150.17px;top:1048.26px;font-size:10.5px;line-height:16px;color:#283593;font-weight:700;">✖</span>
<svg style="left:180.5px;top:1048.3px" width="16" height="14.1" viewBox="0 0 17 15"><path d="M0.300 0.900 H2.400 Q2.900 0.900 2.900 1.500 V14.600" fill="none" stroke="#b0bec5" stroke-width="1.100"/><path d="M3.500 4.200 H16.500 V13 H8.600 V11.700 H5 V13 H3.500 Z" fill="#37a031"/><rect x="9.300" y="11.900" width="4.300" height="1" fill="#e0cc28"/><rect x="14.400" y="11.900" width="1.300" height="1" fill="#e0cc28"/><rect x="10.700" y="5.700" width="4.200" height="4.300" fill="#37474f" stroke="#8fa89a" stroke-width="0.600"/><rect x="3.600" y="7.300" width="1.900" height="2" fill="#dfe3f0"/><path d="M7 6.800h3M6.200 8.800h3.800" stroke="#1f6e24" stroke-width="0.800"/></svg>
<span class="t" style="left:201.67px;top:1048.84px;font-size:12px;line-height:16px;color:#858585;transform:scaleX(0.8785);transform-origin:0 0;">SCHNITTSTELLENÜBERSICHT (1)</span>
<span class="t" style="left:379.87px;top:1048.26px;font-size:10.5px;line-height:16px;color:#283593;font-weight:700;">✖</span>
<svg style="left:410px;top:1047.500px" width="16" height="17" viewBox="0 0 16 17"><circle cx="5.600" cy="5" r="4.600" fill="#bbdefb" stroke="#64b5f6" stroke-width="0.800"/><path d="M5.600 2.400V5.200H3.600" stroke="#1976d2" stroke-width="0.900" fill="none"/><path d="M10 4.400 L15.600 16 H4.400 Z" fill="#90caf9"/><path d="M10 8.200v4.400" stroke="#fdfdfd" stroke-width="1.400"/><circle cx="10" cy="14.200" r="0.800" fill="#fdfdfd"/></svg>
<span class="t" style="left:431.48px;top:1048.84px;font-size:12px;line-height:16px;color:#858585;transform:scaleX(0.8537);transform-origin:0 0;">EVENTRESULT (0)</span>
<span class="t" style="left:529.87px;top:1048.26px;font-size:10.5px;line-height:16px;color:#283593;font-weight:700;">✖</span>
<svg style="left:559px;top:1047.500px" width="16" height="16" viewBox="0 0 16 16"><rect x="0.500" y="0.500" width="12" height="11.600" fill="#f5f8fc" stroke="#42a5f5" stroke-width="0.900"/><rect x="0.500" y="0.500" width="12" height="2.800" fill="#42a5f5"/><path d="M2 1.900h1.200M4.400 1.900h1.200M6.800 1.900h1.200M9.200 1.900h1.200" stroke="#fdfdfd" stroke-width="1"/><circle cx="6" cy="7.800" r="2.800" fill="none" stroke="#78909c" stroke-width="0.900"/><path d="M6 6.200v1.800h1.400" stroke="#78909c" stroke-width="0.800" fill="none"/><path d="M11 8.400 L15.600 10.200 V14.200 L11 16 L6.600 14.200 V10.200 Z" fill="#fb8c00"/><path d="M6.600 10.200 L11 12 L15.600 10.200 L11 8.400 Z" fill="#ffb74d"/></svg>
<span class="t" style="left:580.7px;top:1048.84px;font-size:12px;line-height:16px;color:#858585;transform:scaleX(0.8461);transform-origin:0 0;">ZEITEREIGNISSE (0)</span>
<span class="t" style="left:688.87px;top:1048.26px;font-size:10.5px;line-height:16px;color:#283593;font-weight:700;">✖</span>
<div class="a" style="left:718.7px;top:1052.3px;width:16.3px;height:7.8px;background:#1e88e5;"></div>
<span class="t" style="left:719.88px;top:1049.05px;font-size:6.5px;line-height:16px;color:#fff;font-weight:700;letter-spacing:0.312px;">SAP</span>
<span class="t" style="left:741.48px;top:1048.84px;font-size:12px;line-height:16px;color:#858585;transform:scaleX(0.8999);transform-origin:0 0;">TRANS (SAP) (0)</span>
<span class="t" style="left:834.87px;top:1048.26px;font-size:10.5px;line-height:16px;color:#283593;font-weight:700;">✖</span>
<svg style="left:871.500px;top:1050.500px" width="3" height="11" viewBox="0 0 3 11"><circle cx="1.500" cy="1.400" r="1.250" fill="#2231b5"/><circle cx="1.500" cy="5.500" r="1.250" fill="#2231b5"/><circle cx="1.500" cy="9.600" r="1.250" fill="#2231b5"/></svg>
<span class="t" style="left:887.0px;top:1048.84px;font-size:12px;line-height:16px;color:#858585;transform:scaleX(0.8403);transform-origin:0 0;">WEITERE BEREICHE</span>
<svg style="left:1790.500px;top:1052.500px" width="6" height="8" viewBox="0 0 6 8"><path d="M4.800 0.700 L1.300 4 L4.800 7.300" fill="none" stroke="#1f3a93" stroke-width="1.700"/></svg>
<div class="a" style="left:23px;top:196px;width:1px;height:831px;background:#ffffff;"></div>
<div class="a" style="left:1798px;top:196px;width:1px;height:831px;background:#ffffff;"></div>
<div class="a" style="left:1787px;top:1039px;width:1px;height:35px;background:#f4f4f4;"></div>
<div class="a" style="left:0px;top:0px;width:1800px;height:1px;background:#dfddd3;"></div>
<div class="a" style="left:0px;top:0px;width:1px;height:1076px;background:#43321f;"></div>
<div class="a" style="left:1799px;top:0px;width:1px;height:1076px;background:#4a4a48;"></div>
<div class="a" style="left:0px;top:1075px;width:1800px;height:1px;background:#0c0c0c;"></div>
</body></html>
